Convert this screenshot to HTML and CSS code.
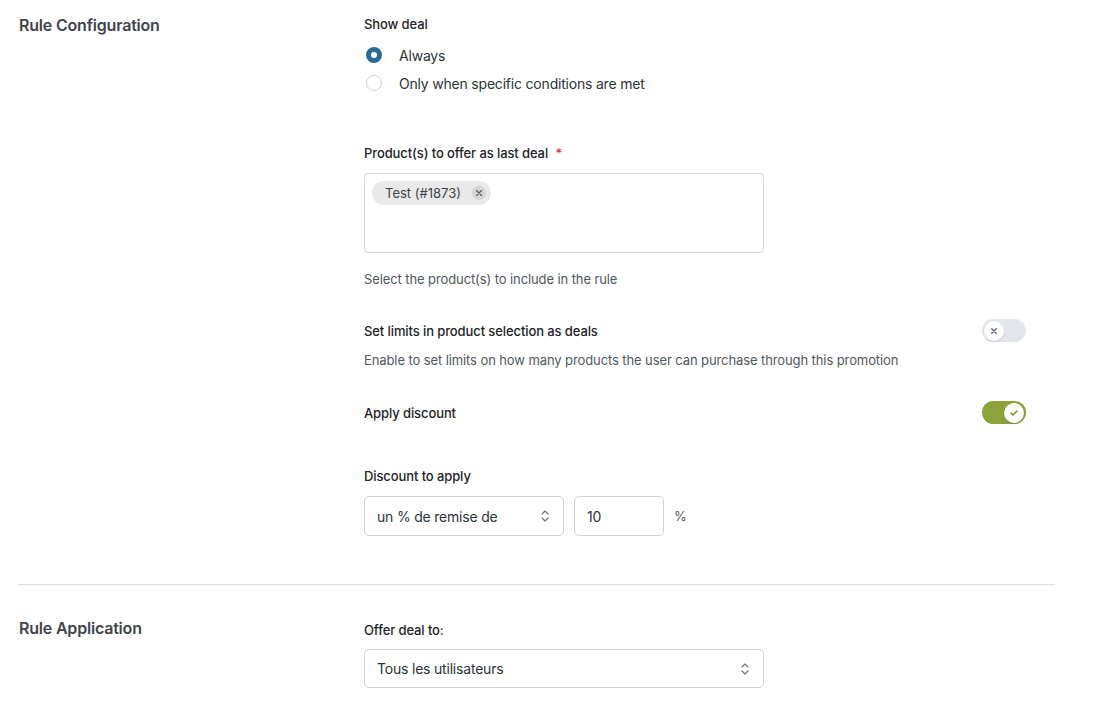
FILE: index.html
```html
<!DOCTYPE html>
<html>
<head>
<meta charset="utf-8">
<link rel="stylesheet" href="styles.css">
</head>
<body>
<div class="page">
  <section class="section first">
    <div class="section-title">Rule Configuration</div>
    <div class="fields">
      <div class="field show-deal">
        <div class="label">Show deal</div>
        <div class="radios">
          <div class="radio-row"><span class="radio checked"></span><span class="radio-text">Always</span></div>
          <div class="radio-row"><span class="radio"></span><span class="radio-text">Only when specific conditions are met</span></div>
        </div>
      </div>

      <div class="field products">
        <div class="label">Product(s) to offer as last deal <span class="req">*</span></div>
        <div class="multi">
          <span class="tag">Test (#1873) <span class="tag-x">
            <svg width="8" height="8" viewBox="0 0 8 8"><path d="M1.5 1.5 L6.5 6.5 M6.5 1.5 L1.5 6.5" stroke="#555" stroke-width="1.1" stroke-linecap="round"/></svg>
          </span></span>
        </div>
        <div class="help">Select the product(s) to include in the rule</div>
      </div>

      <div class="field toggle-field limits">
        <div class="toggle-row">
          <div class="label">Set limits in product selection as deals</div>
          <span class="toggle off"><span class="knob">
            <svg width="8" height="8" viewBox="0 0 8 8"><path d="M1.8 1.8 L6.2 6.2 M6.2 1.8 L1.8 6.2" stroke="#6c6e86" stroke-width="1.6" stroke-linecap="round"/></svg>
          </span></span>
        </div>
        <div class="help">Enable to set limits on how many products the user can purchase through this promotion</div>
      </div>

      <div class="field toggle-field discount">
        <div class="toggle-row">
          <div class="label">Apply discount</div>
          <span class="toggle on"><span class="knob">
            <svg width="10" height="8" viewBox="0 0 10 8"><path d="M2 4.2 L4.1 6 L8 2" fill="none" stroke="#7d9233" stroke-width="1.6" stroke-linecap="round" stroke-linejoin="round"/></svg>
          </span></span>
        </div>
      </div>

      <div class="field disc-apply">
        <div class="label">Discount to apply</div>
        <div class="inline">
          <div class="select small"><span>un % de remise de</span>
            <svg class="chev" width="10" height="14" viewBox="0 0 10 14"><path d="M2 5 L5 2 L8 5 M2 9 L5 12 L8 9" fill="none" stroke="#777" stroke-width="1.2" stroke-linecap="round" stroke-linejoin="round"/></svg>
          </div>
          <div class="input num">10</div>
          <span class="unit">%</span>
        </div>
      </div>
    </div>
  </section>

  <hr class="divider">

  <section class="section second">
    <div class="section-title">Rule Application</div>
    <div class="fields">
      <div class="field">
        <div class="label">Offer deal to:</div>
        <div class="select wide"><span>Tous les utilisateurs</span>
          <svg class="chev" width="10" height="14" viewBox="0 0 10 14"><path d="M2 5 L5 2 L8 5 M2 9 L5 12 L8 9" fill="none" stroke="#777" stroke-width="1.2" stroke-linecap="round" stroke-linejoin="round"/></svg>
        </div>
      </div>
    </div>
  </section>
</div>
</body>
</html>
```

FILE: styles.css
```css
* { box-sizing: border-box; }
html, body { margin: 0; padding: 0; background: #fff; }
body {
  font-family: Inter, "Noto Sans", "Liberation Sans", sans-serif;
  color: #1d2327;
  width: 1093px;
  height: 702px;
  overflow: hidden;
}
.page { padding: 0 38px 0 18px; }
.section { display: flex; }
.section.first { padding-top: 15px; }
.section-title {
  width: 346px;
  padding-left: 1px;
  font-size: 16px;
  font-weight: 600;
  color: #3f454c;
  line-height: 20px;
  letter-spacing: -0.2px;
  flex-shrink: 0;
}
.fields { flex: 1; }
.label {
  font-size: 13px;
  font-weight: 500;
  color: #1d2327;
  line-height: 18px;
  letter-spacing: -0.1px;
}
.req { color: #d63638; margin-left: 4px; }
.radios { margin-top: 8px; }
.radio-row { display: flex; align-items: center; height: 28px; }
.radio {
  width: 16px; height: 16px; border-radius: 50%;
  border: 1px solid #cfd2d6; background: #fff;
  margin-left: 2px; margin-right: 17px;
  flex-shrink: 0;
}
.radio.checked { border: 5px solid #2b6a93; background: #fff; }
.radio-text { font-size: 14px; color: #2c3338; letter-spacing: -0.2px; }

.products { margin-top: 47px; }
.multi {
  margin-top: 11px;
  width: 400px; height: 80px;
  border: 1px solid #d0d3d8; border-radius: 4px;
  padding: 7px 7px;
}
.tag {
  display: inline-flex; align-items: center;
  height: 24px; padding: 0 5px 0 13px;
  background: #e9e9e9; border-radius: 12px;
  font-size: 13px; color: #3c434a;
}
.tag-x {
  display: inline-flex; align-items: center; justify-content: center;
  width: 14px; height: 14px; border-radius: 50%;
  background: #d5d5d5; margin-left: 11px;
}
.help { font-size: 13px; color: #50575e; line-height: 18px; letter-spacing: -0.1px; }
.products .help { margin-top: 17px; }

.toggle-row { display: flex; align-items: center; justify-content: space-between; width: 662px; }
.limits { margin-top: 31px; }
.limits .help { margin-top: 9px; }
.discount { margin-top: 32px; }
.toggle {
  width: 44px; height: 23px; border-radius: 12px;
  display: inline-flex; align-items: center; padding: 0 2px;
}
.toggle.off { background: #e3e6ea; justify-content: flex-start; }
.toggle.on { background: #8ba13a; justify-content: flex-end; }
.knob {
  width: 20px; height: 20px; border-radius: 50%; background: #fff;
  display: inline-flex; align-items: center; justify-content: center;
  box-shadow: 0 1px 2px rgba(0,0,0,0.15);
}

.disc-apply { margin-top: 43px; }
.inline { display: flex; align-items: center; margin-top: 11px; }
.select, .input {
  height: 40px; border: 1px solid #d0d3d8; border-radius: 5px;
  display: flex; align-items: center; justify-content: space-between;
  padding: 0 13px 0 12px;
  font-size: 14px; color: #2c3338; background: #fff;
  letter-spacing: -0.2px;
}
.select.small { width: 200px; }
.input.num { width: 90px; margin-left: 10px; }
.unit { margin-left: 10px; font-size: 13px; color: #50575e; }

.divider {
  border: 0; border-top: 1px solid #dcdcde;
  margin: 48px 0 0 0; width: 1037px;
}
.second { padding-top: 32px; }
.second .section-title { margin-top: 1px; }
.second .label { margin-top: 4px; }
.select.wide { width: 400px; height: 39px; margin-top: 10px; }
```
